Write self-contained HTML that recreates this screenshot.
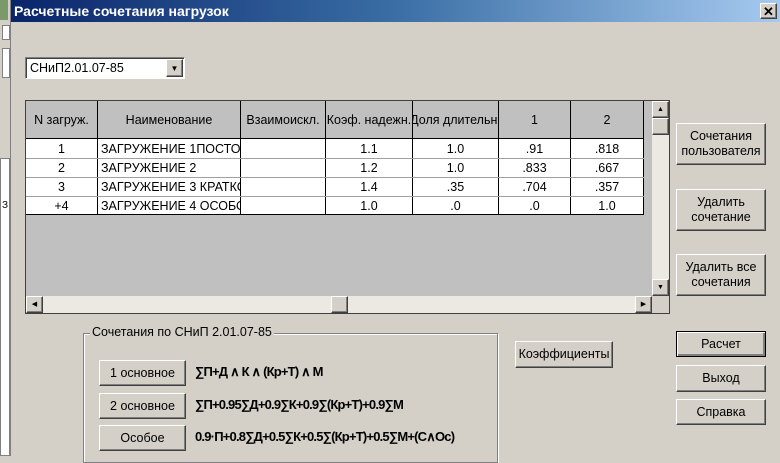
<!DOCTYPE html>
<html><head><meta charset="utf-8"><style>
*{box-sizing:border-box;margin:0;padding:0}
body{width:780px;height:456px;overflow:hidden;background:#d4d0c8;font-family:"Liberation Sans",sans-serif;font-size:12px;color:#000;position:relative}
.a{position:absolute}
.btn{position:absolute;background:#d4d0c8;border:1px solid;border-color:#fff #404040 #404040 #fff;box-shadow:inset -1px -1px 0 #808080;display:flex;align-items:center;justify-content:center;text-align:center;line-height:15px;font-size:12.5px}
.cell{position:absolute;border-right:1px solid #000;height:100%;display:flex;align-items:center;justify-content:center;font-size:12.5px;overflow:hidden;white-space:nowrap}
.row{position:absolute;left:0;width:618px;background:#fff;border-bottom:1px solid #a0a0a0}
.f{font-weight:bold;font-size:13px;letter-spacing:-0.8px;white-space:nowrap}
</style></head><body>
<div class="a" style="left:0;top:0;width:11px;height:456px;background:#d4d0c8;border-right:1px solid #808080"></div>
<div class="a" style="left:0;top:0;width:8px;height:20px;background:#7a9a6a"></div>
<div class="a" style="left:2px;top:25px;width:8px;height:15px;background:#fff;border:1px solid #808080"></div>
<div class="a" style="left:2px;top:48px;width:8px;height:30px;background:#fff;border:1px solid #808080"></div>
<div class="a" style="left:0;top:158px;width:10px;height:298px;background:#fff;border:1px solid #808080"></div>
<div class="a" style="left:2px;top:200px;font-size:10px">З</div>
<div class="a" style="left:11px;top:0;width:769px;height:22px;background:linear-gradient(90deg,#0a246a,#3a6ea5 50%,#a6caf0);color:#fff;font-weight:bold;font-size:14px;line-height:22px;padding-left:3px">Расчетные сочетания нагрузок</div>
<div class="btn" style="left:760px;top:3px;width:17px;height:16px;font-weight:bold;font-size:13px">✕</div>
<div class="a" style="left:25px;top:57px;width:160px;height:22px;background:#fff;border:1px solid;border-color:#808080 #fff #fff #808080;box-shadow:inset 1px 1px 0 #404040;padding:3px 4px;font-size:12.5px">СНиП2.01.07-85</div>
<div class="btn" style="left:166px;top:59px;width:17px;height:18px;font-size:8px">▼</div>
<div class="a" style="left:25px;top:100px;width:645px;height:214px;border:1px solid #404040;background:#c0c0c0;overflow:hidden">
  <div class="a" style="left:0;top:0;width:618px;height:38px;background:#c0c0c0;border-bottom:1px solid #000">
    <div class="cell" style="left:0;width:72px">N загруж.</div>
    <div class="cell" style="left:72px;width:143px">Наименование</div>
    <div class="cell" style="left:215px;width:85px">Взаимоискл.</div>
    <div class="cell" style="left:300px;width:87px">Коэф. надежн.</div>
    <div class="cell" style="left:387px;width:86px">Доля длительн.</div>
    <div class="cell" style="left:473px;width:72px">1</div>
    <div class="cell" style="left:545px;width:73px">2</div>
  </div>
  <div class="row" style="top:38px;height:20px">
    <div class="cell" style="left:0;width:72px">1</div><div class="cell" style="left:72px;width:143px;justify-content:flex-start;padding-left:3px">ЗАГРУЖЕНИЕ 1ПОСТОЯН</div><div class="cell" style="left:215px;width:85px"></div><div class="cell" style="left:300px;width:87px">1.1</div><div class="cell" style="left:387px;width:86px">1.0</div><div class="cell" style="left:473px;width:72px">.91</div><div class="cell" style="left:545px;width:73px">.818</div></div>
  <div class="row" style="top:58px;height:19px">
    <div class="cell" style="left:0;width:72px">2</div><div class="cell" style="left:72px;width:143px;justify-content:flex-start;padding-left:3px">ЗАГРУЖЕНИЕ 2</div><div class="cell" style="left:215px;width:85px"></div><div class="cell" style="left:300px;width:87px">1.2</div><div class="cell" style="left:387px;width:86px">1.0</div><div class="cell" style="left:473px;width:72px">.833</div><div class="cell" style="left:545px;width:73px">.667</div></div>
  <div class="row" style="top:77px;height:19px">
    <div class="cell" style="left:0;width:72px">3</div><div class="cell" style="left:72px;width:143px;justify-content:flex-start;padding-left:3px">ЗАГРУЖЕНИЕ 3 КРАТКОВ</div><div class="cell" style="left:215px;width:85px"></div><div class="cell" style="left:300px;width:87px">1.4</div><div class="cell" style="left:387px;width:86px">.35</div><div class="cell" style="left:473px;width:72px">.704</div><div class="cell" style="left:545px;width:73px">.357</div></div>
  <div class="row" style="top:96px;height:18px;border-bottom:1px solid #000">
    <div class="cell" style="left:0;width:72px">+4</div><div class="cell" style="left:72px;width:143px;justify-content:flex-start;padding-left:3px">ЗАГРУЖЕНИЕ 4 ОСОБОЕ</div><div class="cell" style="left:215px;width:85px"></div><div class="cell" style="left:300px;width:87px">1.0</div><div class="cell" style="left:387px;width:86px">.0</div><div class="cell" style="left:473px;width:72px">.0</div><div class="cell" style="left:545px;width:73px">1.0</div></div>
  <div class="a" style="left:626px;top:0;width:17px;height:195px;background:#ece9e2"></div>
  <div class="btn" style="left:626px;top:0;width:17px;height:17px;font-size:7px">▲</div>
  <div class="btn" style="left:626px;top:17px;width:17px;height:17px"></div>
  <div class="btn" style="left:626px;top:178px;width:17px;height:17px;font-size:7px">▼</div>
  <div class="a" style="left:0;top:195px;width:626px;height:17px;background:#ece9e2"></div>
  <div class="btn" style="left:0;top:195px;width:17px;height:17px;font-size:7px">◀</div>
  <div class="btn" style="left:305px;top:195px;width:17px;height:17px"></div>
  <div class="btn" style="left:609px;top:195px;width:17px;height:17px;font-size:7px">▶</div>
  <div class="a" style="left:626px;top:195px;width:17px;height:17px;background:#d4d0c8"></div>
</div>
<div class="btn" style="left:676px;top:123px;width:90px;height:42px">Сочетания<br>пользователя</div>
<div class="btn" style="left:676px;top:189px;width:90px;height:42px">Удалить<br>сочетание</div>
<div class="btn" style="left:676px;top:254px;width:90px;height:42px">Удалить все<br>сочетания</div>
<div class="btn" style="left:676px;top:331px;width:90px;height:26px;border:1px solid #000;box-shadow:inset 1px 1px 0 #fff,inset -2px -2px 0 #808080">Расчет</div>
<div class="btn" style="left:676px;top:365px;width:90px;height:27px">Выход</div>
<div class="btn" style="left:676px;top:399px;width:90px;height:26px">Справка</div>
<div class="btn" style="left:515px;top:341px;width:98px;height:27px">Коэффициенты</div>
<div class="a" style="left:83px;top:333px;width:415px;height:130px;border:1px solid #808080;box-shadow:1px 1px 0 #fff,inset 1px 1px 0 #fff"></div>
<div class="a" style="left:90px;top:325px;background:#d4d0c8;padding:0 2px;font-size:12.5px">Сочетания по СНиП 2.01.07-85</div>
<div class="btn" style="left:99px;top:360px;width:87px;height:26px">1 основное</div>
<div class="btn" style="left:99px;top:393px;width:87px;height:26px">2 основное</div>
<div class="btn" style="left:99px;top:425px;width:87px;height:26px">Особое</div>
<div class="a f" style="left:195px;top:364px">∑П+Д ∧ К ∧ (Кр+Т) ∧ М</div>
<div class="a f" style="left:195px;top:397px">∑П+0.95∑Д+0.9∑К+0.9∑(Кр+Т)+0.9∑М</div>
<div class="a f" style="left:195px;top:429px">0.9·П+0.8∑Д+0.5∑К+0.5∑(Кр+Т)+0.5∑М+(С∧Ос)</div>
</body></html>
